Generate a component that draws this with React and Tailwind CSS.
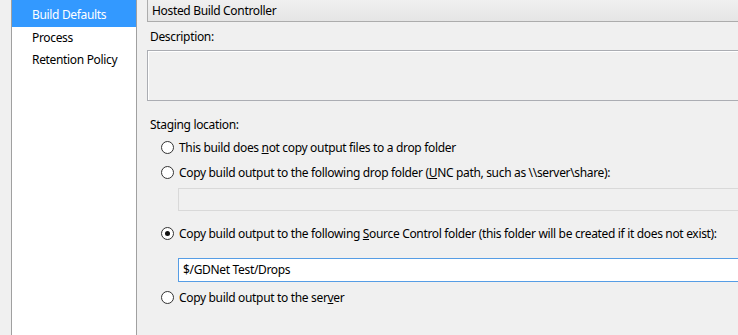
const FONT = "font-['Noto_Sans',sans-serif]"

function Radio({ checked, children }) {
  return (
    <div className="flex items-center h-[25px] gap-[5px] pl-[14px]">
      <span className="w-[13px] h-[13px] rounded-full border border-[#333] bg-white flex items-center justify-center shrink-0">
        {checked && <span className="w-[5px] h-[5px] rounded-full bg-[#111]" />}
      </span>
      <span className="whitespace-nowrap">{children}</span>
    </div>
  )
}

export default function App() {
  return (
    <div className={`w-[738px] h-[335px] overflow-hidden bg-[#f0f0f0] flex text-[12px] tracking-[-0.33px] text-black ${FONT}`}>
      <div className="w-[11px] shrink-0" />
      <div className="w-[126px] shrink-0 bg-white border-x border-[#a0a0a0] flex flex-col">
        <div className="h-[27px] bg-[#3399ff] text-white pl-[20px] pt-[7px] leading-[16px]">Build Defaults</div>
        <div className="h-[22px] pl-[20px] flex items-center">Process</div>
        <div className="h-[22px] pl-[20px] flex items-center">Retention Policy</div>
      </div>
      <div className="flex-1 min-w-0 pl-[10px] flex flex-col">
        <div className="h-[22px] border-l border-b border-[#acacac] bg-gradient-to-b from-[#f0f0f0] to-[#e5e5e5] pl-[4px] leading-[21px] whitespace-nowrap">
          Hosted Build Controller
        </div>
        <div className="mt-[7px] h-[16px] leading-[16px] pl-[3px]">Description:</div>
        <div className="mt-[5px] h-[51px] border border-r-0 border-[#abadb3] shadow-[inset_1px_1px_0_#fff]" />
        <div className="mt-[16px] h-[16px] leading-[16px] pl-[3px]">Staging location:</div>
        <div className="mt-[2px]">
          <Radio>
            This build does <u>n</u>ot copy output files to a drop folder
          </Radio>
          <Radio>
            Copy build output to the following drop folder (<u>U</u>NC path, such as \\server\share):
          </Radio>
        </div>
        <div className="mt-[3px] ml-[31px] h-[23px] border border-r-0 border-[#d9d9d9]" />
        <div className="mt-[10px]">
          <Radio checked>
            Copy build output to the following <u>S</u>ource Control folder (this folder will be created if it does not exist):
          </Radio>
        </div>
        <div className="mt-[12px] ml-[31px] h-[24px] border border-r-0 border-[#569de5] bg-white pl-[4px] leading-[22px] whitespace-nowrap">
          $/GDNet Test/Drops
        </div>
        <div className="mt-[3px]">
          <Radio>
            Copy build output to the ser<u>v</u>er
          </Radio>
        </div>
      </div>
    </div>
  )
}
